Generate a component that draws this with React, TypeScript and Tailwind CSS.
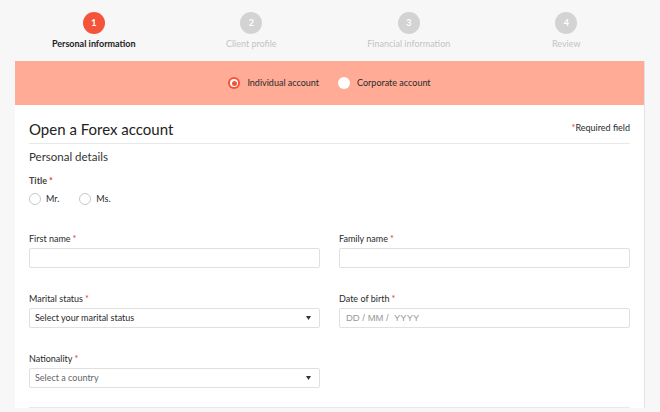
import React from "react";

const Req = () => <span className="text-[#e0352b] ml-[2px]">*</span>;

function Step({ n, label, active }: { n: number; label: string; active?: boolean }) {
  return (
    <div className="flex flex-col items-center">
      <div
        className={`w-[22px] h-[22px] rounded-full flex items-center justify-center text-[9px] font-bold text-white ${
          active ? "bg-[#f4553a]" : "bg-[#d3d3d3]"
        }`}
      >
        {n}
      </div>
      <div className={`mt-[4px] text-[9px] leading-[12px] ${active ? "font-bold text-[#222]" : "text-[#c4c4c4]"}`}>{label}</div>
    </div>
  );
}

function Field({ label, children }: { label: string; children: React.ReactNode }) {
  return (
    <div className="flex flex-col">
      <div className="text-[9px] leading-[12px] text-[#2a2a2a] h-[12px]">
        {label}
        <Req />
      </div>
      <div className="mt-[3px]">{children}</div>
    </div>
  );
}

const inputCls = "h-[20px] w-full border border-[#e0e0e0] rounded-[2px] bg-white";

function Select({ text, muted }: { text: string; muted?: boolean }) {
  return (
    <div className={`${inputCls} flex items-center justify-between pl-[5px] pr-[8px]`}>
      <span className={`text-[9px] ${muted ? "text-[#666]" : "text-[#2a2a2a]"}`}>{text}</span>
      <svg width="5" height="4" viewBox="0 0 5 4"><path d="M0 0h5L2.5 4z" fill="#333" /></svg>
    </div>
  );
}

function Radio({ label }: { label: string }) {
  return (
    <div className="flex items-center">
      <div className="w-[12px] h-[12px] rounded-full border border-[#c8c8c8] bg-white" />
      <span className="ml-[5px] text-[9px] text-[#2a2a2a]">{label}</span>
    </div>
  );
}

export default function App() {
  return (
    <div className="w-[660px] h-[412px] overflow-hidden bg-[#f7f7f7]" style={{ fontFamily: "Lato, 'Open Sans', sans-serif" }}>
      <div className="pt-[12px] px-[15px]">
        <div className="grid grid-cols-4 w-[630px]">
          <Step n={1} label="Personal information" active />
          <Step n={2} label="Client profile" />
          <Step n={3} label="Financial information" />
          <Step n={4} label="Review" />
        </div>
      </div>
      <div className="mx-[15px] mt-[11px] w-[630px] bg-white border-r border-[#e3e3e3]">
        <div className="h-[44px] bg-[#ffab96] flex items-center justify-center gap-[19px]">
          <div className="flex items-center">
            <div className="w-[12px] h-[12px] rounded-full bg-[#f4553a] flex items-center justify-center">
              <div className="w-[8px] h-[8px] rounded-full bg-white flex items-center justify-center">
                <div className="w-[5px] h-[5px] rounded-full bg-[#f4553a]" />
              </div>
            </div>
            <span className="ml-[7px] text-[9px] text-[#2a2a2a]">Individual account</span>
          </div>
          <div className="flex items-center">
            <div className="w-[12px] h-[12px] rounded-full bg-white" />
            <span className="ml-[7px] text-[9px] text-[#2a2a2a]">Corporate account</span>
          </div>
        </div>
        <div className="px-[14px] pt-[15px]">
          <div className="flex items-end justify-between pb-[5px] border-b border-[#e8e8e8]">
            <div className="text-[15px] leading-[18px] text-[#222]">Open a Forex account</div>
            <div className="text-[9px] leading-[12px] text-[#2a2a2a] mb-[4px]">
              <span className="text-[#e0352b]">*</span>Required field
            </div>
          </div>
          <div className="mt-[6px] text-[11.5px] leading-[14px] text-[#333]">Personal details</div>
          <div className="mt-[11px] text-[9px] leading-[12px] font-bold text-[#444]">
            Title<Req />
          </div>
          <div className="mt-[6px] flex items-center gap-[20px] h-[12px]">
            <Radio label="Mr." />
            <Radio label="Ms." />
          </div>
          <div className="mt-[28px] grid grid-cols-2 gap-x-[19px] gap-y-[25px]">
            <Field label="First name">
              <div className={inputCls} />
            </Field>
            <Field label="Family name">
              <div className={inputCls} />
            </Field>
            <Field label="Marital status">
              <Select text="Select your marital status" />
            </Field>
            <Field label="Date of birth">
              <div className={`${inputCls} flex items-center pl-[6px]`}>
                <span className="text-[9.5px] text-[#999]" style={{ fontFamily: "'Liberation Sans', Arial, sans-serif" }}>
                  DD&nbsp;/&nbsp;MM&nbsp;/&nbsp;&nbsp;YYYY
                </span>
              </div>
            </Field>
            <Field label="Nationality">
              <Select text="Select a country" muted />
            </Field>
            <div />
          </div>
          <div className="mt-[19px] border-b border-[#e8e8e8]" />
        </div>
      </div>
    </div>
  );
}
